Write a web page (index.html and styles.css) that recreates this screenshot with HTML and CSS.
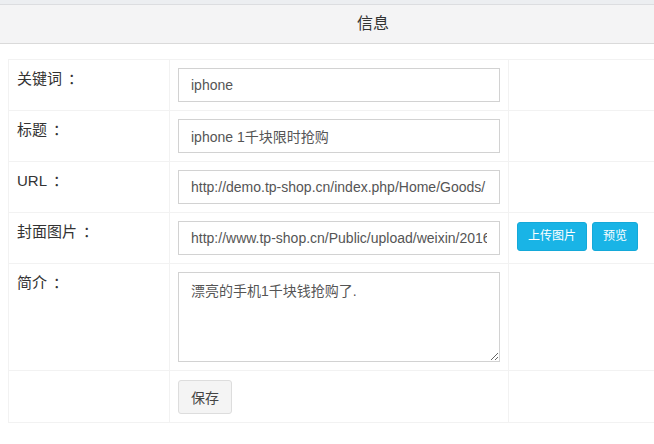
FILE: index.html
```html
<!DOCTYPE html>
<html lang="zh">
<head>
<meta charset="utf-8">
<title>信息</title>
<link rel="stylesheet" href="styles.css">
</head>
<body>
<div class="page">
  <div class="topstrip"></div>
  <div class="panel-head">信息</div>
  <table class="form-table">
    <colgroup>
      <col class="c1"><col class="c2"><col class="c3">
    </colgroup>
    <tr>
      <td class="label">关键词<span class="colon">：</span></td>
      <td><input class="field" type="text" value="iphone"></td>
      <td></td>
    </tr>
    <tr>
      <td class="label">标题<span class="colon">：</span></td>
      <td><input class="field" type="text" value="iphone 1千块限时抢购"></td>
      <td></td>
    </tr>
    <tr>
      <td class="label">URL<span class="colon">：</span></td>
      <td><input class="field" type="text" value="http://demo.tp-shop.cn/index.php/Home/Goods/ goodsInfo/id/1"></td>
      <td></td>
    </tr>
    <tr>
      <td class="label">封面图片<span class="colon">：</span></td>
      <td><input class="field" type="text" value="http://www.tp-shop.cn/Public/upload/weixin/2016/01/cover.jpg"></td>
      <td class="actions"><button class="btn-info">上传图片</button><button class="btn-info">预览</button></td>
    </tr>
    <tr>
      <td class="label">简介<span class="colon">：</span></td>
      <td><textarea class="field area">漂亮的手机1千块钱抢购了.</textarea></td>
      <td></td>
    </tr>
    <tr>
      <td class="label"></td>
      <td><button class="btn-default">保存</button></td>
      <td></td>
    </tr>
  </table>
</div>
</body>
</html>
```

FILE: styles.css
```css
html, body {
  margin: 0;
  padding: 0;
  background: #fff;
  overflow: hidden;
}
body {
  font-family: "Liberation Sans", Arial, "Noto Sans CJK SC", sans-serif;
  color: #333;
  font-size: 14px;
}
.page {
  width: 746px;
}
.topstrip {
  height: 4px;
  background: #eceef1;
  border-bottom: 1px solid #dcdde0;
}
.panel-head {
  height: 38px;
  line-height: 38px;
  background: #f4f4f5;
  border-bottom: 1px solid #dadada;
  text-align: center;
  font-size: 16px;
  color: #333;
}
.form-table {
  margin: 15px 8px 0 8px;
  width: 730px;
  border-collapse: collapse;
  table-layout: fixed;
}
.c1 { width: 161px; }
.c2 { width: 339px; }
.form-table td {
  border: 1px solid #f2f2f2;
  padding: 8px;
  vertical-align: top;
  line-height: 20px;
}
.form-table td.label {
  font-size: 15px;
  color: #333;
  padding-top: 9px;
}
.colon {
  padding-left: 6px;
}
.field {
  display: block;
  box-sizing: border-box;
  width: 322px;
  height: 34px;
  padding: 6px 12px;
  border: 1px solid #d2d2d2;
  border-radius: 0;
  font-family: "Liberation Sans", Arial, "Noto Sans CJK SC", sans-serif;
  font-size: 14px;
  color: #555;
  background: #fff;
  margin: 0;
  outline: none;
}
.area {
  height: 90px;
  padding: 8px 12px;
  resize: vertical;
  line-height: 20px;
}
.actions {
  padding-top: 9px !important;
  font-size: 0;
}
.btn-info {
  box-sizing: border-box;
  height: 29px;
  padding: 0 10px;
  margin-right: 5px;
  background: #19b4e6;
  border: 1px solid #14a9d9;
  border-radius: 3px;
  color: #fff;
  font-family: "Liberation Sans", Arial, "Noto Sans CJK SC", sans-serif;
  font-size: 12px;
  line-height: 27px;
}
.btn-default {
  box-sizing: border-box;
  height: 34px;
  width: 54px;
  padding: 0;
  margin-top: 1px;
  background: #f4f4f4;
  border: 1px solid #ddd;
  border-radius: 3px;
  color: #444;
  font-family: "Liberation Sans", Arial, "Noto Sans CJK SC", sans-serif;
  font-size: 14px;
}
```
